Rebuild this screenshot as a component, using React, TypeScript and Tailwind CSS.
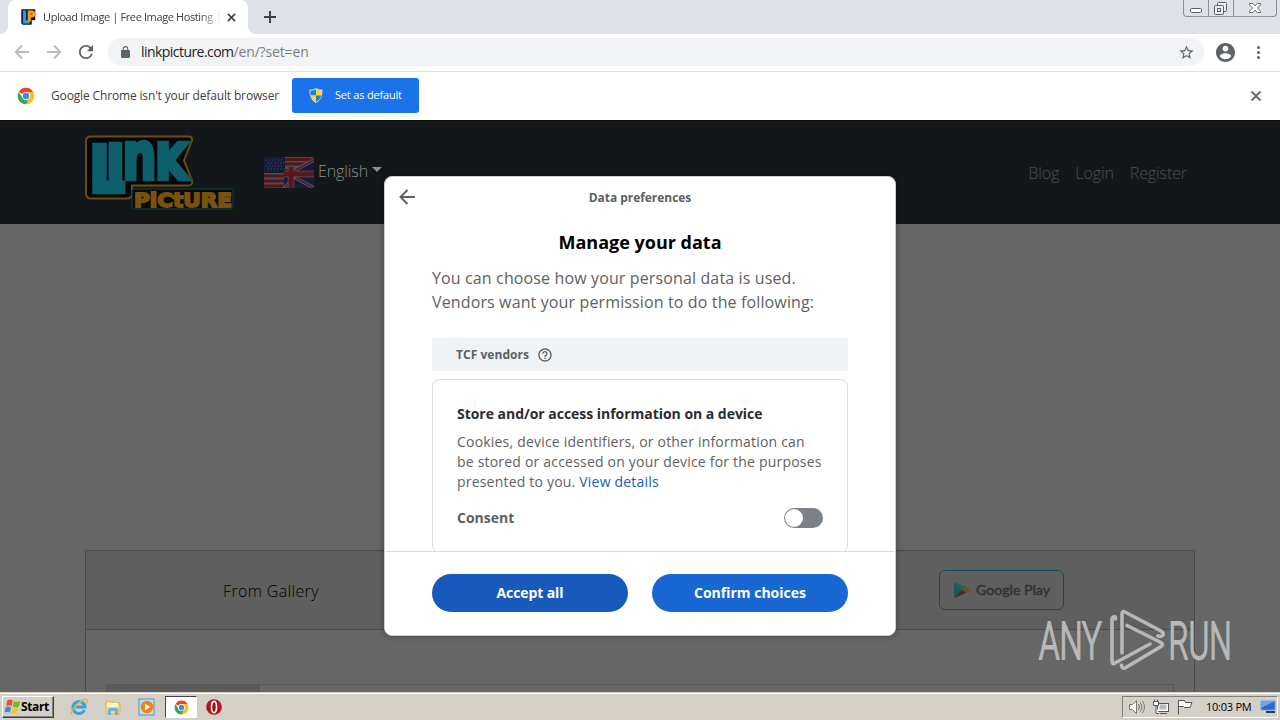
import React from 'react'

const ChromeLogo: React.FC<{ className?: string }> = ({ className }) => (
  <svg viewBox="0 0 48 48" className={className}>
    <circle cx="24" cy="24" r="22" fill="#fff" />
    <path d="M24 24 4.9 13A22 22 0 0 1 43.1 13H24Z" fill="#ea4335" />
    <path d="M24 13H43.1A22 22 0 0 1 24 46L33.5 29.5Z" fill="#fbc116" />
    <path d="M4.9 13A22 22 0 0 0 24 46L33.5 29.5 14.5 29.5Z" fill="#34a853" />
    <circle cx="24" cy="24" r="11" fill="#fff" />
    <circle cx="24" cy="24" r="8.6" fill="#4285f4" />
  </svg>
)

const WindowControls: React.FC = () => (
  <div className="flex h-[17px] w-[94px] rounded-b-[4px] border border-t-0 border-[#8b8f97] mr-[3px]">
    <div className="w-[25px] border-r border-[#8b8f97]">
      <svg viewBox="0 0 24 16" className="h-4 w-6" fill="#fff" stroke="#5b5f66">
        <rect x="6.5" y="8.5" width="11" height="4" rx="1" />
      </svg>
    </div>
    <div className="w-[25px] border-r border-[#8b8f97]">
      <svg viewBox="0 0 24 16" className="h-4 w-6" fill="#eceef1" stroke="#5b5f66">
        <rect x="8.5" y="2.5" width="9" height="9" rx="1" />
        <rect x="5.5" y="5.5" width="9" height="9" rx="1" />
        <rect x="8.5" y="8.5" width="3" height="3" />
      </svg>
    </div>
    <svg viewBox="0 0 42 16" className="h-4 w-[42px]" fill="#fff" stroke="#5b5f66" strokeWidth=".9">
      <path d="M15.5 3.5h3.4l2.1 2.3 2.1-2.3h3.4v1.4L23.4 8l3.1 3.1v1.4h-3.4L21 10.2l-2.1 2.3h-3.4v-1.4L18.6 8l-3.1-3.1Z" />
    </svg>
  </div>
)

const TabStrip: React.FC = () => (
  <div className="flex h-[34px] items-start bg-[#dee1e6]">
    <div className="h-[34px] w-2 bg-white">
      <div className="h-full w-full rounded-br-lg bg-[#dee1e6]" />
    </div>
    <div className="flex h-[34px] w-[240px] items-center rounded-t-lg bg-white pl-[13px]">
      <svg viewBox="0 0 15 17" className="h-[17px] w-[15px] shrink-0 font-['DejaVu_Sans'] font-bold">
        <path d="M1.500 1h12v9.500H10V15H2L1 14V1Z" fill="#111" stroke="#111" strokeWidth="1.500" strokeLinejoin="round" />
        <text x="1.200" y="14" fontSize="15" fill="#1fa4dd" stroke="#1fa4dd">
          <tspan textLength="7.500" lengthAdjust="spacingAndGlyphs">L</tspan>
          <tspan x="6" y="12" fontSize="13.500" textLength="8.500" lengthAdjust="spacingAndGlyphs" fill="#f59a22" stroke="#f59a22">P</tspan>
        </text>
      </svg>
      <span className="ml-[7px] w-[172px] shrink-0 whitespace-nowrap font-['Open_Sans'] text-[11px] tracking-[-0.38px] text-[#3c4043] [mask-image:linear-gradient(to_right,#000_158px,#0006_171px)]">
        Upload Image | Free Image Hosting
      </span>
      <span className="ml-[3px] h-3 w-px bg-[#eceef0]" />
      <svg viewBox="0 0 10 10" className="ml-[8px] h-[9px] w-[9px] shrink-0" stroke="#3c4043" strokeWidth="1.800">
        <path d="M1 1l8 8M9 1l-8 8" />
      </svg>
    </div>
    <div className="h-[34px] w-2 bg-white">
      <div className="h-full w-full rounded-bl-lg bg-[#dee1e6]" />
    </div>
    <svg viewBox="0 0 12 12" className="ml-2 mt-[11px] h-3 w-3" stroke="#3c4043" strokeWidth="2">
      <path d="M6 0v12M0 6h12" />
    </svg>
    <div className="flex-1" />
    <WindowControls />
  </div>
)

const Toolbar: React.FC = () => (
  <div className="flex h-[38px] items-center border-b border-[#dcdde0] bg-white pl-[14px] pr-[11px] pb-px">
    <svg viewBox="0 0 16 16" className="h-4 w-4" fill="none" stroke="#babcbe" strokeWidth="1.900">
      <path d="M15 8H2M8 1.500 1.800 8 8 14.500" />
    </svg>
    <svg viewBox="0 0 16 16" className="ml-4 h-4 w-4" fill="none" stroke="#babcbe" strokeWidth="1.900">
      <path d="M1 8h13M8 1.500 14.200 8 8 14.500" />
    </svg>
    <svg viewBox="4 4 16 16" className="ml-[17px] mr-px h-[14px] w-[14px]" fill="#5f6368">
      <path d="M17.650 6.350A7.958 7.958 0 0 0 12 4c-4.420 0-7.990 3.580-7.990 8s3.570 8 7.990 8c3.730 0 6.840-2.550 7.730-6h-2.080A5.990 5.990 0 0 1 12 18c-3.310 0-6-2.690-6-6s2.690-6 6-6c1.660 0 3.140.690 4.220 1.780L13 11h7V4l-2.350 2.350z" />
    </svg>
    <div className="ml-[14px] flex h-7 w-[1096px] items-center rounded-full bg-[#f1f3f4] pl-[13px] pr-[9px]">
      <svg viewBox="4 1 16 21" className="h-[12px] w-[9px]" fill="#5f6368">
        <path d="M18 8h-1V6c0-2.760-2.240-5-5-5S7 3.240 7 6v2H6c-1.100 0-2 .9-2 2v10c0 1.100.9 2 2 2h12c1.100 0 2-.9 2-2V10c0-1.100-.9-2-2-2zM9 6c0-1.660 1.340-3 3-3s3 1.340 3 3v2H9V6z" />
      </svg>
      <span className="ml-[11px] flex-1 pb-px font-['Open_Sans'] text-[14px] tracking-[-0.15px] text-[#7b7f83]">
        <span className="tracking-[-0.55px] text-[#202124]">linkpicture.com</span>/en/?set=en
      </span>
      <svg viewBox="0 0 24 24" className="h-[17px] w-[17px]" fill="#5f6368">
        <path d="M22 9.240l-7.190-.62L12 2 9.190 8.630 2 9.240l5.460 4.730L5.820 21 12 17.270 18.180 21l-1.630-7.030L22 9.240zM12 15.400l-3.760 2.270 1-4.280-3.320-2.880 4.380-.38L12 6.100l1.710 4.040 4.380.38-3.320 2.880 1 4.280L12 15.400z" />
      </svg>
    </div>
    <svg viewBox="2 2 20 20" className="ml-3 h-[19px] w-[19px]" fill="#5f6368">
      <path d="M12 2C6.480 2 2 6.480 2 12s4.480 10 10 10 10-4.480 10-10S17.520 2 12 2zm0 3c1.660 0 3 1.340 3 3s-1.340 3-3 3-3-1.340-3-3 1.340-3 3-3zm0 14.200a7.200 7.200 0 0 1-6-3.220c.03-1.990 4-3.080 6-3.080 1.990 0 5.970 1.090 6 3.080a7.200 7.200 0 0 1-6 3.220z" />
    </svg>
    <div className="ml-[22px] flex flex-col gap-[2px]">
      <span className="h-[3px] w-[3px] rounded-full bg-[#5f6368]" />
      <span className="h-[3px] w-[3px] rounded-full bg-[#5f6368]" />
      <span className="h-[3px] w-[3px] rounded-full bg-[#5f6368]" />
    </div>
  </div>
)

const DefaultBrowserBar: React.FC = () => (
  <div className="flex h-12 items-center bg-white pl-[17px] pr-[19px]">
    <ChromeLogo className="h-[18px] w-[18px]" />
    <span className="ml-4 w-[241px] whitespace-nowrap font-['Open_Sans'] text-[12px] tracking-[-0.15px] text-[#3c4043]">
      Google Chrome isn't your default browser
    </span>
    <div className="mt-[6px] flex h-[35px] w-[127px] items-center self-start rounded-[3px] bg-[#1a73e8] pl-[17px]">
      <svg viewBox="0 0 14 16" className="h-[15px] w-[14px]">
        <path d="M7 0c2 1.300 4.300 1.800 7 1.800 0 6.500-1.500 11-7 14.200C1.500 12.800 0 8.300 0 1.800 2.700 1.800 5 1.300 7 0Z" fill="#c9d6e6" />
        <path d="M7 1.200V8H1.400C1.100 6.300 1 4.700 1 2.800 3.500 2.700 5.400 2.100 7 1.200Z" fill="#2a7bc8" />
        <path d="M7 1.200V8h5.600c.3-1.700.4-3.300.4-5.200-2.500-.1-4.400-.7-6-1.600Z" fill="#fbd43b" />
        <path d="M7 14.800V8H1.400c.7 2.900 2.400 5.200 5.600 6.800Z" fill="#fbd43b" />
        <path d="M7 14.800V8h5.600c-.7 2.900-2.400 5.200-5.600 6.800Z" fill="#2a7bc8" />
      </svg>
      <span className="ml-[12px] whitespace-nowrap font-['Open_Sans'] text-[11px] tracking-[-0.18px] text-white">
        Set as default
      </span>
    </div>
    <div className="flex-1" />
    <svg viewBox="0 0 10 10" className="h-[10px] w-[10px]" stroke="#5f6368" strokeWidth="1.900">
      <path d="M.5.5l9 9M9.500.5l-9 9" />
    </svg>
  </div>
)

const SiteLogo: React.FC = () => (
  <svg viewBox="0 0 150 80" className="h-20 w-[150px] overflow-visible font-['DejaVu_Sans'] font-bold">
    <path
      d="M7 5.500h97q5 0 4 4l-8 20 8 20q1 5-4 5H48v8q0 5-5 5H7q-5 0-5-5V10q0-4.500 5-4.500Z"
      fill="#050708"
      stroke="#6d4a10"
      strokeWidth="2"
    />
    <text x="5" y="61" fontSize="64" fill="#0e5f6c" stroke="#0e5f6c" strokeWidth="4.500">
      <tspan textLength="36" lengthAdjust="spacingAndGlyphs">L</tspan>
      <tspan x="23" y="48" fontSize="46" textLength="17" lengthAdjust="spacingAndGlyphs">i</tspan>
      <tspan x="38.500" y="48" fontSize="65" textLength="34" lengthAdjust="spacingAndGlyphs">n</tspan>
      <tspan x="71.500" y="48" fontSize="50" textLength="32" lengthAdjust="spacingAndGlyphs">K</tspan>
    </text>
    <rect x="48" y="58" width="101" height="20" rx="2" fill="#080b0c" stroke="#0d4450" />
    <text
      x="50"
      y="75.500"
      textLength="98"
      lengthAdjust="spacingAndGlyphs"
      fontSize="20"
      fill="#7a520e"
      stroke="#7a520e"
      strokeWidth="1.800"
    >
      PiCtURE
    </text>
  </svg>
)

const LanguageFlag: React.FC = () => (
  <svg viewBox="0 0 50 31" className="h-[31px] w-[50px]">
    <rect width="50" height="31" rx="2" fill="#4a4c50" />
    <path d="M0 13.500h25M0 19h22M0 24h22M0 29h22M21 2.500h29M21 7h20" stroke="#571419" strokeWidth="3" />
    <rect width="21" height="16" fill="#141e38" />
    <path d="M2 3h18M4 6h16M2 9h18M4 12h16" stroke="#434a5a" strokeDasharray="1 2" />
    <path d="M50 3v28H20V20Z" fill="#141d40" />
    <path d="M50 3 22 18M50 31 28 19M20 31l9-9" stroke="#54565a" strokeWidth="3.600" />
    <path d="M50 3 30 14M50 31 32 21M21 30l6-6" stroke="#5a151c" strokeWidth="1.500" />
    <path d="M27 11v20M20 17h30" stroke="#54565a" strokeWidth="6.500" />
    <path d="M27 10v21M20 17h30" stroke="#5e151c" strokeWidth="5" />
  </svg>
)

const SiteHeader: React.FC = () => (
  <div className="flex h-[104px] items-start border-t border-[#0b0d0f] bg-[#14171a] pl-[84px] pr-[93px] font-['Open_Sans'] font-light text-[16px]">
    <div className="mt-[10px]">
      <SiteLogo />
    </div>
    <div className="ml-[30px] mt-[36px]">
      <LanguageFlag />
    </div>
    <span className="ml-1 mt-[38px] w-[53px] whitespace-nowrap tracking-[-0.1px] text-[#8b8d8f]">English</span>
    <span className="ml-[1px] mt-[46px] h-0 w-0 border-x-[5px] border-t-[5px] border-x-transparent border-t-[#8b8d8f]" />
    <div className="flex-1" />
    <div className="mt-[40px] flex gap-4 tracking-[-0.1px] text-[#4b4e50]">
      <span>Blog</span>
      <span>Login</span>
      <span>Register</span>
    </div>
  </div>
)

const UploadCard: React.FC = () => (
  <div className="mx-[85px] mt-[326px] h-[142px] border border-b-0 border-[#4b4b4b]">
    <div className="flex h-[79px] items-center justify-between border-b border-[#4b4b4b] bg-[#5f5f5f] pl-[137px] pr-[130px]">
      <span className="pt-[2px] font-['Open_Sans'] text-[16px] font-light tracking-[0.36px] text-black">From Gallery</span>
      <div className="flex h-10 w-[125px] items-center rounded-[6px] border border-[#17495c] pl-[13px]">
        <svg viewBox="0 0 18 18" className="h-[18px] w-[18px]">
          <path d="M1 1v16l8-8Z" fill="#175a5c" />
          <path d="m1 1 8 8 4-3Z" fill="#1d655a" />
          <path d="m9 9 4-3 5 3-5 3Z" fill="#6b5320" />
          <path d="m1 17 8-8 4 3Z" fill="#5c2027" />
        </svg>
        <svg viewBox="0 0 76 20" className="ml-[5px] h-5 w-[76px] overflow-visible">
          <text
            x="0"
            y="15"
            textLength="74"
            lengthAdjust="spacingAndGlyphs"
            fontFamily="Lato"
            fontSize="13.500"
            fill="#303234"
            stroke="#303234"
            strokeWidth=".4"
          >
            Google Play
          </text>
        </svg>
      </div>
    </div>
    <div className="mx-5 mt-[54px] flex h-[9px] border border-b-0 border-[#585858]">
      <div className="w-[153px] border-r border-[#555] bg-[#5b5b5b]" />
    </div>
  </div>
)

const ConsentDialog: React.FC = () => (
  <div className="flex h-[460px] w-[512px] flex-col overflow-hidden rounded-lg border border-[#d0d0d0] bg-white font-['Open_Sans'] shadow-[0_0_6px_rgba(0,0,0,0.35)]">
    <div className="grid h-[42px] shrink-0 grid-cols-[44px_1fr_44px] items-center">
      <svg viewBox="0 0 16 16" className="mb-[2px] ml-[14px] h-4 w-4" fill="none" stroke="#5f6062" strokeWidth="2">
        <path d="M16 8H1.500M8.500 1 1.500 8l7 7" />
      </svg>
      <span className="text-center text-[12px] font-bold tracking-[-0.05px] text-[#5d5f61]">Data preferences</span>
    </div>
    <div className="flex h-[332px] shrink-0 flex-col overflow-hidden px-[47px]">
      <h1 className="mt-[11px] text-center text-[18px] leading-6 font-bold text-black">Manage your data</h1>
      <p className="mt-3 whitespace-nowrap text-[16px] leading-6 tracking-[0.13px] text-[#5f6062]">
        You can choose how your personal data is used.
        <br />
        Vendors want your permission to do the following:
      </p>
      <div className="mt-6 flex h-[33px] shrink-0 items-center bg-[#f0f3f6] pl-6">
        <span className="text-[12px] font-bold tracking-[0.04px] text-[#5d5f61]">TCF vendors</span>
        <svg viewBox="0 0 24 24" className="ml-2 h-4 w-4" fill="#5d5f61">
          <path d="M11 18h2v-2h-2v2zm1-16C6.480 2 2 6.480 2 12s4.480 10 10 10 10-4.480 10-10S17.520 2 12 2zm0 18c-4.410 0-8-3.590-8-8s3.590-8 8-8 8 3.590 8 8-3.590 8-8 8zm0-14c-2.210 0-4 1.790-4 4h2c0-1.100.9-2 2-2s2 .9 2 2c0 2-3 1.750-3 5h2c0-2.250 3-2.500 3-5 0-2.210-1.790-4-4-4z" />
        </svg>
      </div>
      <div className="mt-2 h-[174px] shrink-0 rounded-lg border border-[#d8dadc] px-6 pt-6">
        <h2 className="whitespace-nowrap text-[14px] leading-5 font-bold tracking-[-0.03px] text-[#2b2c2e]">
          Store and/or access information on a device
        </h2>
        <p className="mt-2 whitespace-nowrap text-[14px] leading-5 tracking-[0.2px] text-[#5f6062]">
          Cookies, device identifiers, or other information can
          <br />
          be stored or accessed on your device for the purposes
          <br />
          presented to you. <span className="text-[#1a5dbd]">View details</span>
        </p>
        <div className="mt-4 flex items-center justify-between">
          <span className="text-[14px] leading-5 font-bold text-[#5d5f61]">Consent</span>
          <div className="flex h-5 w-[39px] items-center rounded-full bg-[#7c8187] pl-px">
            <span className="h-[18px] w-[18px] rounded-full bg-white" />
          </div>
        </div>
      </div>
    </div>
    <div className="flex flex-1 gap-6 border-t border-[#d8dadc] px-[47px] pt-[22px] text-[14px] font-bold text-white">
      <button className="h-[38px] w-[196px] rounded-full bg-[#185abc] pb-[2px] tracking-[-0.1px]">Accept all</button>
      <button className="h-[38px] w-[196px] rounded-full bg-[#1967d2] pb-[2px]">Confirm choices</button>
    </div>
  </div>
)

const Watermark: React.FC = () => (
  <svg
    viewBox="0 0 196 64"
    className="h-16 w-[196px] overflow-visible"
    fill="#b8b8b8"
    stroke="#b8b8b8"
    fontFamily="Roboto"
    fontSize="51"
    fontWeight="300"
  >
    <g strokeWidth="1.800">
      <text transform="translate(2 51) scale(.64 1)">ANY</text>
      <text transform="translate(131.500 51) scale(.62 1)">RUN</text>
    </g>
    <g fill="none" strokeWidth="3.600" strokeLinejoin="round" strokeLinecap="round">
      <path d="M78.500 11V9q-3-1-3.500 2v42q0 4 3 2l35-19" />
      <path d="M85 45V6q0-3.500 3-2l36 19q3 2 2 4-1.500 2-5 1" />
      <path d="M90 17.500l34 17q3 2 0 4L88 60q-3.500 1-3.500-3" />
    </g>
  </svg>
)

const QUICK_LAUNCH = [
  <svg key="ie" viewBox="0 0 18 18" className="h-[18px] w-[18px]">
    <path d="M14.500 12A6 6 0 1 1 15 9H5.500" fill="none" stroke="#36a4e0" strokeWidth="3" />
    <path d="M1.500 16.500C-.5 13 13-.5 16.500 1.500q1.500 1-.5 4" fill="none" stroke="#e3b53a" strokeWidth="1.500" />
  </svg>,
  <svg key="folder" viewBox="0 0 18 18" className="h-[18px] w-[18px]">
    <path d="M2 3h6l1 2h7v11H2Z" fill="#f3d672" stroke="#c9a94a" strokeWidth=".6" />
    <path d="M3 5h11v4H3Z" fill="#fff6cd" />
    <path d="M4 17v-5q0-2 2-2h6q2 0 2 2v5h-3v-4H7v4Z" fill="#6fb4dd" />
  </svg>,
  <svg key="player" viewBox="0 0 18 18" className="h-[18px] w-[18px]">
    <rect x="1" y="1" width="15" height="16" fill="#b9dcf4" stroke="#5d95bd" />
    <circle cx="9" cy="9" r="6.200" fill="#f5820f" />
    <path d="m7 5.500 5 3.500-5 3.500Z" fill="#fff" />
  </svg>,
]

const Taskbar: React.FC = () => (
  <div className="h-7 border-t border-[#d4d0c8] bg-[#d4d0c8]">
    <div className="flex h-[27px] items-start border-t border-white pl-[2px] pr-[2px] pt-[2px]">
      <div className="flex h-[22px] w-[52px] items-center border border-white border-r-[#404040] border-b-[#404040] pl-px shadow-[inset_-1px_-1px_0_#808080]">
        <svg viewBox="0 1 15.500 14" className="h-[16px] w-[17px] shrink-0">
          <path d="M3 2q2.500-1.500 5 0L7 7Q4.500 6 2 7Z" fill="#e8542a" />
          <path d="M9 2.500q2.500 1.500 6 0L13.500 8Q11 9 8 7.500Z" fill="#7cb82f" />
          <path d="M1.500 8q2.500-1 5 .3L5.500 13Q3 12 .5 13Z" fill="#3f8fd6" />
          <path d="M7.500 9q3 1.200 5.800.2L12 14q-3 1-5.500-.5Z" fill="#f6c32c" />
        </svg>
        <span className="whitespace-nowrap font-['Open_Sans'] text-[12px] font-bold tracking-[-0.35px] text-black">Start</span>
      </div>
      <div className="ml-[16px] mt-[2px] flex gap-4">{QUICK_LAUNCH}</div>
      <div className="ml-[9px] flex h-[22px] w-8 items-center justify-center border border-[#404040] border-r-white border-b-white bg-white">
        <ChromeLogo className="h-[15px] w-[15px]" />
      </div>
      <svg viewBox="0 0 16 16" className="ml-[9px] mt-[3px] h-4 w-4">
        <circle cx="8" cy="8" r="7.800" fill="#b5121b" />
        <ellipse cx="8" cy="8" rx="2.500" ry="5.600" fill="#8f0d14" stroke="#fff" strokeWidth="1.600" />
      </svg>
      <div className="flex-1" />
      <div className="flex h-[22px] w-[156px] items-center border border-[#808080] border-r-white border-b-white pl-[6px]">
        <svg viewBox="0 0 16 16" className="h-4 w-4" fill="none" stroke="#77797b">
          <path d="M.5 5.500h3l4-4v13l-4-4h-3Z" fill="#fff" />
          <path d="M9.500 5q2 3 0 6M11.500 3.500q3 4.500 0 9M13.500 2q4 6 0 12" />
        </svg>
        <svg viewBox="0 0 16 16" className="ml-2 h-4 w-4" fill="#fff" stroke="#55585a">
          <rect x="4.500" y="4.500" width="11" height="8" />
          <path d="M7 14.500h7" />
          <path d="M6.500 5.500h7v5h-7Z" fill="#b9babb" stroke="none" />
          <path d="M.5 2.500h5v4h-5ZM1.500.5v2M4.500.5v2M3 6.500v8h3" />
        </svg>
        <svg viewBox="0 0 16 16" className="ml-[8px] h-4 w-4" fill="#fff" stroke="#55585a">
          <path d="M1.500 1v14.500M1.500 1.500h6l1 2h6.500l-2 5H7.500l-1-1h-5" />
        </svg>
        <span className="ml-[13px] w-[54px] whitespace-nowrap font-['Open_Sans'] text-[11px] tracking-[-0.25px] text-black">10:03 PM</span>
        <svg viewBox="0 0 16 14" className="h-[14px] w-4">
          <path d="M1 1h14v9H1Z" fill="#2b68c9" stroke="#6aa0e6" />
          <path d="M1 1h14L1 8Z" fill="#6da4ec" />
          <path d="M6 11h9v2H6Z" fill="#2a3a55" />
        </svg>
      </div>
    </div>
  </div>
)

const App: React.FC = () => {
  return (
    <div className="flex h-[720px] w-[1280px] flex-col overflow-hidden">
      <TabStrip />
      <Toolbar />
      <DefaultBrowserBar />
      <div className="relative h-[572px] overflow-hidden bg-[#666]">
        <SiteHeader />
        <UploadCard />
        <div className="absolute inset-0 flex items-center justify-center">
          <ConsentDialog />
        </div>
        <div className="absolute right-[47px] bottom-[20px]">
          <Watermark />
        </div>
      </div>
      <Taskbar />
    </div>
  )
}

export default App
